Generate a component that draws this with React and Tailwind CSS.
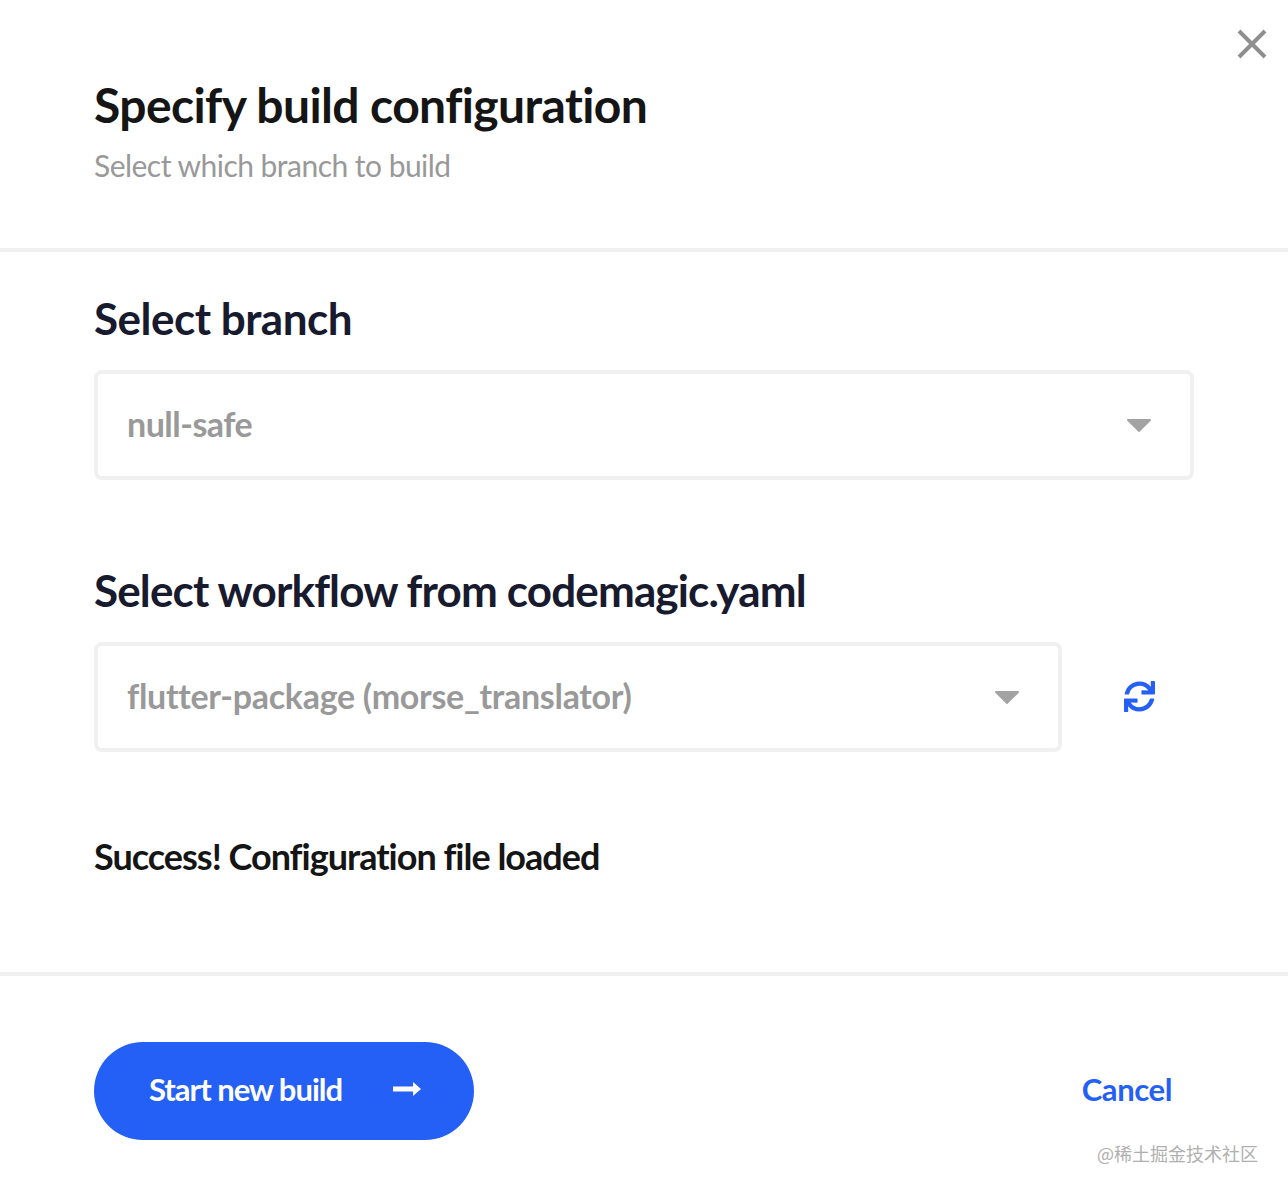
import React from 'react';
import { FaSync } from 'react-icons/fa';

const font = "font-['Lato','Liberation_Sans',sans-serif]";

const Caret = () => (
    <svg width="24" height="13" viewBox="0 0 24 13" className="shrink-0">
        <path d="M1 0h22a1 1 0 0 1 .7 1.700L12.800 12.600a1 1 0 0 1-1.600 0L.3 1.700A1 1 0 0 1 1 0z" fill="#a3a3a3" />
    </svg>
);

const SelectBox = ({ value, className, textClass }) => (
    <div className={`flex h-[110px] items-center justify-between rounded-lg border-4 border-[#f0f0f0] pl-[29px] pr-[39px] ${className}`}>
        <span className={`pb-[4px] text-[34px] font-bold text-[#999999] ${textClass}`}>{value}</span>
        <Caret />
    </div>
);

export default function App() {
    return (
        <div className={`relative flex h-[1194px] w-[1288px] flex-col bg-white ${font}`}>
            {/* close */}
            <button className="absolute right-[20px] top-[28px]">
                <svg width="32" height="32" viewBox="0 0 32 32" className="block">
                    <path d="M3 3l26 26M29 3L3 29" stroke="#8f8f8f" strokeWidth="4" />
                </svg>
            </button>

            {/* header */}
            <div className="h-[252px] shrink-0 border-b-4 border-[#f0f0f0] pl-[94px] pt-[74px]">
                <h1 className="text-[48px] font-bold leading-[62px] tracking-[-0.6px] text-[#151515]">Specify build configuration</h1>
                <p className="mt-[11px] text-[30px] leading-[36px] tracking-[-0.52px] text-[#999999]">Select which branch to build</p>
            </div>

            {/* body */}
            <div className="h-[724px] shrink-0 border-b-4 border-[#f0f0f0] pl-[94px] pt-[40px]">
                <h2 className="text-[44px] font-bold leading-[52px] tracking-[-0.5px] text-[#181a2e]">Select branch</h2>
                <SelectBox value="null-safe" className="mt-[26px] w-[1100px]" textClass="tracking-[-0.5px]" />

                <h2 className="mt-[84px] text-[44px] font-bold leading-[52px] tracking-[-0.85px] text-[#181a2e]">Select workflow from codemagic.yaml</h2>
                <div className="mt-[26px] flex items-center">
                    <SelectBox value="flutter-package (morse_translator)" className="w-[968px]" textClass="tracking-[-0.3px]" />
                    <FaSync className="mb-[2px] ml-[62px] text-[31px] text-[#2460f6]" />
                </div>

                <p className="mt-[82px] text-[36px] font-bold leading-[44px] tracking-[-1px] text-[#151515]">Success! Configuration file loaded</p>
            </div>

            {/* footer */}
            <div className="flex items-start justify-between pl-[94px] pr-[116px] pt-[66px]">
                <button className="flex h-[98px] w-[380px] items-center rounded-[49px] bg-[#2460f6] pl-[55px] text-[31px] font-bold tracking-[-1px] text-white">
                    <span className="pb-[4px]">Start new build</span>
                    <svg width="28" height="14" viewBox="0 0 28 14" className="mb-[4px] ml-[51px]">
                        <path d="M0 4.500h20V0l8 7-8 7V9.500H0z" fill="#fff" />
                    </svg>
                </button>
                <a className="mt-[28px] text-[31px] font-bold leading-[38px] tracking-[-0.4px] text-[#2460f6]">Cancel</a>
            </div>

            {/* watermark */}
            <span className="absolute bottom-[29px] right-[30px] font-['Noto_Sans_CJK_SC',sans-serif] text-[18px] leading-[24px] text-[#b0b0b0]">@稀土掘金技术社区</span>
        </div>
    );
}
